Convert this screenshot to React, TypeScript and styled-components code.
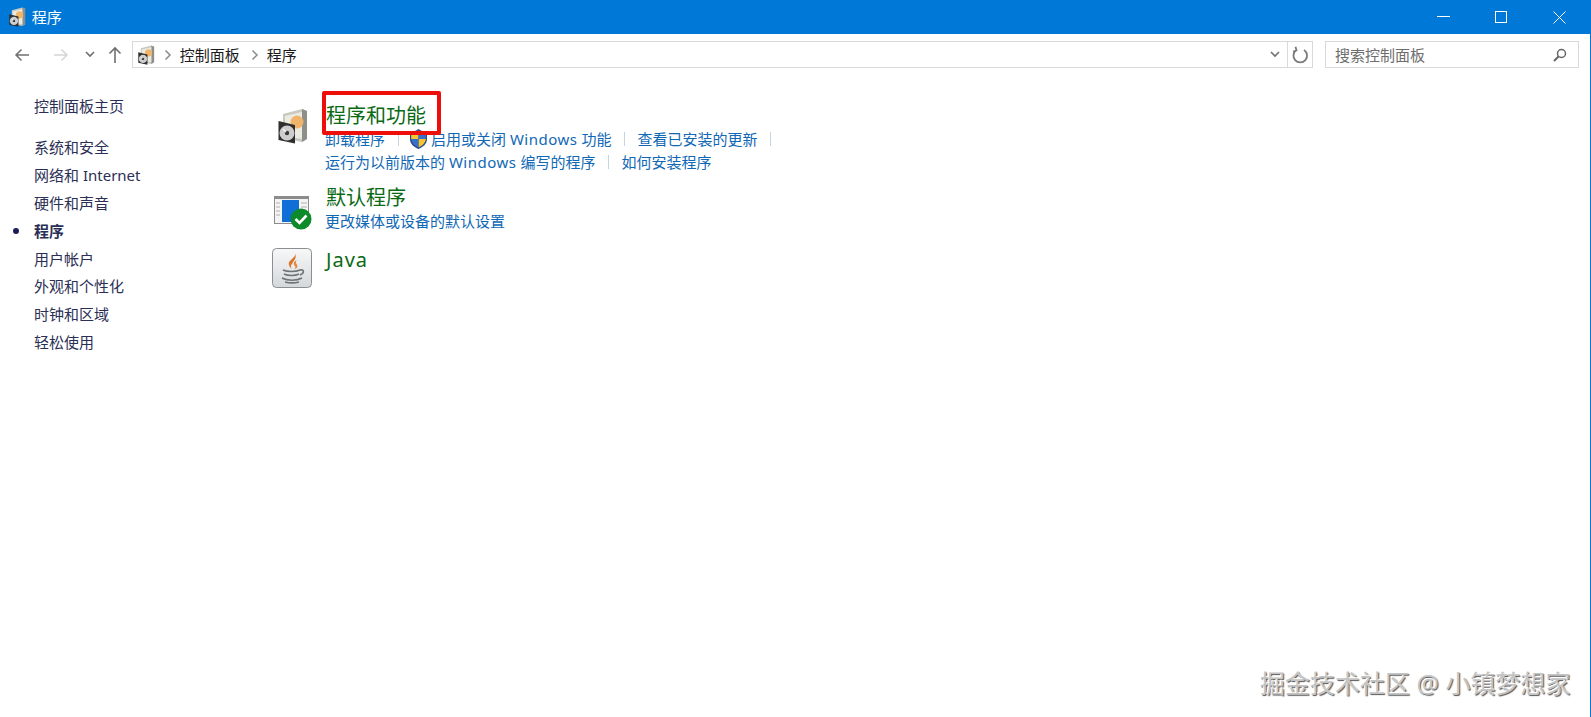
import React from "react";
import styled, { createGlobalStyle } from "styled-components";

const Global = createGlobalStyle`
  html, body { margin: 0; padding: 0; background: #fff; }
  body { font-family: "Noto Sans", "Noto Sans CJK SC", sans-serif; overflow: hidden; }
`;

const Win = styled.div`
  position: relative; width: 1591px; height: 717px; box-sizing: border-box;
  border-right: 1px solid #0078d7; background: #fff; overflow: hidden;
`;
const TitleBar = styled.div`
  height: 34px; background: #0078d7; display: flex; align-items: center; padding-left: 9px; color: #fff;
`;
const TitleText = styled.span`font-size: 15px; margin-left: 6px; line-height: 20px;`;
const WinButtons = styled.div`margin-left: auto; display: flex; align-items: center;`;
const WinBtn = styled.div`
  width: 46px; height: 34px; margin-left: 12px; display: flex; align-items: center; justify-content: center;
  &:last-child { margin-right: 8px; }
`;
const NavBar = styled.div`
  height: 27px; padding: 7px 11px 0 0; display: flex; align-items: stretch;
`;
const NavIcons = styled.div`width: 132px; display: flex; align-items: center; flex: none;`;
const NavIcon = styled.span<{ $left: number }>`
  display: flex; width: 18px; margin-left: ${p => p.$left}px; justify-content: center;
`;
const AddressBox = styled.div`
  flex: 1; border: 1px solid #d9d9d9; display: flex; align-items: center; box-sizing: border-box; padding-left: 5px;
  font-size: 15px; color: #1a1a1a;
`;
const Crumb = styled.span<{ $left: number }>`
  display: flex; margin: 0 8px 0 ${p => p.$left}px;
`;
const Spacer = styled.div`flex: 1;`;
const AddrEnd = styled.div`
  width: 24px; align-self: stretch; border-left: 1px solid #d9d9d9; display: flex; align-items: center; justify-content: center;
`;
const DropSlot = styled.div`width: 24px; display: flex; justify-content: center;`;
const SearchBox = styled.div`
  width: 254px; margin-left: 12px; border: 1px solid #d9d9d9; box-sizing: border-box; display: flex; align-items: center;
  padding: 0 11px 0 9px; font-size: 15px; color: #6d6d6d; justify-content: space-between;
`;
const Body = styled.div`display: flex; padding-top: 28px;`;
const Side = styled.nav`width: 272px; flex: none; padding-left: 34px; box-sizing: border-box;`;
const SideItem = styled.div<{ $active?: boolean; $gap?: number }>`
  position: relative; font-size: 15px; line-height: 20px; height: 20px; margin-bottom: 7.9px;
  margin-top: ${p => p.$gap ?? 0}px;
  color: #2b2f55; font-weight: ${p => (p.$active ? 700 : 400)};
  ${p => p.$active ? `&::before { content: ""; position: absolute; left: -21px; top: 7px; width: 6px; height: 6px; border-radius: 50%; background: #1c1c5a; }` : ""}
`;
const Main = styled.main`flex: 1; padding-top: 7px;`;
const Section = styled.section<{ $h: number }>`display: flex; height: ${p => p.$h}px;`;
const IconCell = styled.div<{ $pl: number; $pt: number }>`
  width: 53px; flex: none; box-sizing: border-box; padding: ${p => p.$pt}px 0 0 ${p => p.$pl}px;
`;
const Heading = styled.div`
  position: relative; font-size: 20px; line-height: 25px; color: #0a6a14; margin-left: 1px; width: fit-content;
`;
const Latin = styled.span`letter-spacing: 0.5px;`;
const HeadLatin = styled.span`letter-spacing: 1px;`;
const RedBox = styled.div`
  position: absolute; left: -4px; top: -12px; width: 119px; height: 44px; border: 4px solid #ef0f0a; border-radius: 2px; box-sizing: border-box;
`;
const LinkRow = styled.div`
  display: flex; align-items: center; font-size: 15px; line-height: 22px; height: 22.5px; color: #1168b5; white-space: pre;
`;
const Sep = styled.span`width: 1px; height: 14px; background: #c8d4dc; margin: 0 12px 0 13px;`;
const Shield = styled.span`display: inline-flex; margin: 0 3px 0 -2px;`;
const Watermark = styled.div`
  position: absolute; left: 1260px; top: 668px; font-size: 25px; line-height: 30px; white-space: nowrap;
  color: #c4c4c4; text-shadow: -1px -1px 0 #fff, 1px 1px 1px #555;
`;

const ProgIcon = ({ s = 36 }: { s?: number }) => (
  <svg width={s * 30 / 36} height={s} viewBox="0 0 30 36">
    <path d="M5 6 L24 1 L29 3 L29 31 L24 34 L5 30 Z" fill="#c9c9c2" />
    <path d="M24 1 L29 3 L29 31 L24 34 Z" fill="#8f8f8a" />
    <path d="M7 8 L24 4 L24 31 L7 28 Z" fill="#ecebe2" />
    <circle cx="19" cy="14" r="6.500" fill="#f0b46a" />
    <path d="M0.500 13 L17 17 L17 35.500 L0.500 32 Z" fill="#2f2f2f" />
    <circle cx="9" cy="25" r="7.500" fill="#cdcdcd" />
    <circle cx="9" cy="25" r="2.200" fill="#3a3a3a" />
    <path d="M5 21 L8 24" stroke="#f2f2f2" strokeWidth="1.500" />
  </svg>
);

const LinkShield = () => (
  <svg width="19" height="22" viewBox="0 0 19 22">
    <path d="M9.500 1 C12 3 15 4 18 4 L18 11 C18 16 14 19 9.500 21 C5 19 1 16 1 11 L1 4 C4 4 7 3 9.500 1 Z" fill="#2d4a8a" />
    <path d="M9.500 2.500 L9.500 11 L2.200 11 L2.200 5 C5 5 7.500 4 9.500 2.500 Z" fill="#f7c52c" />
    <path d="M9.500 2.500 C11.500 4 14 5 16.800 5 L16.800 11 L9.500 11 Z" fill="#3a70c8" />
    <path d="M9.500 11 L16.800 11 C16.500 15 13 18 9.500 19.500 Z" fill="#f7c52c" />
    <path d="M2.200 11 L9.500 11 L9.500 19.500 C6 18 2.500 15 2.200 11 Z" fill="#3a70c8" />
  </svg>
);

const DefaultIcon = () => (
  <svg width="38" height="34" viewBox="0 0 38 34">
    <rect x="0" y="0" width="35" height="28" fill="#8c8c8c" />
    <rect x="1" y="3" width="33" height="24" fill="#f4f4f4" />
    <rect x="8" y="4" width="17" height="22" fill="#0f6fd6" />
    <path d="M2 7h4M2 11h4M2 15h4M2 19h4M27 7h6M27 11h6M27 15h6" stroke="#b0b0b0" strokeWidth="1" />
    <circle cx="27" cy="23" r="10.500" fill="#0d8a2a" />
    <path d="M21.500 23 L25.500 27 L32.500 19.500" stroke="#fff" strokeWidth="2.600" fill="none" />
  </svg>
);

const JavaIcon = () => (
  <svg width="40" height="40" viewBox="0 0 40 40">
    <defs>
      <linearGradient id="jb" x1="0" y1="0" x2="0" y2="1">
        <stop offset="0" stopColor="#f8f8f8" />
        <stop offset="1" stopColor="#d4d8da" />
      </linearGradient>
    </defs>
    <rect x="0.500" y="0.500" width="39" height="39" rx="4" fill="url(#jb)" stroke="#8a8f93" />
    <path d="M23 5 C25 10 15 12 17 17 C17.500 19 19 20 20 21 C18 19 19 17 20.500 15 C22.500 12 25 10 23 5 Z" fill="#d9752c" />
    <path d="M25 12 C21 14 21 16 23 18 C24 20 23 21 22 21.500 C26 20 26 18 24.500 16 C23.500 14.500 24 13 25 12 Z" fill="#e58a3c" />
    <path d="M11 22 C15 24 24 24 28 22 M12 26 C16 28 23 28 27 26 M10 30 C15 33 25 33 30 30 M13 34 C17 35 23 35 27 34 M28 22 C32 21 33 25 28 27" stroke="#6d7478" strokeWidth="1.600" fill="none" />
  </svg>
);

const Chevron = () => (
  <svg width="8" height="12" viewBox="0 0 8 12"><path d="M1.500 1.500 L6 6 L1.500 10.500" stroke="#8a8a8a" strokeWidth="1.500" fill="none" /></svg>
);
const Down = () => (
  <svg width="10" height="7" viewBox="0 0 10 7"><path d="M1 1 L5 5 L9 1" stroke="#6f6f6f" strokeWidth="1.600" fill="none" /></svg>
);

const sideItems = ["系统和安全", "网络和 Internet", "硬件和声音", "程序", "用户帐户", "外观和个性化", "时钟和区域", "轻松使用"];

export default function App() {
  return (
    <Win>
      <Global />
      <TitleBar>
        <ProgIcon s={20} />
        <TitleText>程序</TitleText>
        <WinButtons>
          <WinBtn><svg width="13" height="2" viewBox="0 0 13 2"><rect width="13" height="1" fill="#fff" /></svg></WinBtn>
          <WinBtn><svg width="12" height="12" viewBox="0 0 12 12"><rect x="0.500" y="0.500" width="11" height="11" fill="none" stroke="#fff" /></svg></WinBtn>
          <WinBtn><svg width="13" height="13" viewBox="0 0 13 13"><path d="M0.500 0.500 L12.500 12.500 M12.500 0.500 L0.500 12.500" stroke="#fff" /></svg></WinBtn>
        </WinButtons>
      </TitleBar>
      <NavBar>
        <NavIcons>
          <NavIcon $left={13}><svg width="16" height="14" viewBox="0 0 16 14"><path d="M15 7 H2 M7.500 1.500 L2 7 L7.500 12.500" stroke="#6f6f6f" strokeWidth="1.500" fill="none" /></svg></NavIcon>
          <NavIcon $left={21}><svg width="16" height="14" viewBox="0 0 16 14"><path d="M1 7 H14 M8.500 1.500 L14 7 L8.500 12.500" stroke="#d6d6d6" strokeWidth="1.500" fill="none" /></svg></NavIcon>
          <NavIcon $left={11}><Down /></NavIcon>
          <NavIcon $left={7}><svg width="14" height="17" viewBox="0 0 14 17"><path d="M7 17 V2 M1.500 7.500 L7 2 L12.500 7.500" stroke="#6f6f6f" strokeWidth="1.600" fill="none" /></svg></NavIcon>
        </NavIcons>
        <AddressBox>
          <ProgIcon s={20} />
          <Crumb $left={9}><Chevron /></Crumb>
          <span>控制面板</span>
          <Crumb $left={11}><Chevron /></Crumb>
          <span>程序</span>
          <Spacer />
          <DropSlot><Down /></DropSlot>
          <AddrEnd>
            <svg width="17" height="18" viewBox="0 0 17 18"><path d="M4.500 4 A6.800 6.800 0 1 0 12 4 M3.500 0.800 L4.500 4.500 L1 5.500" stroke="#7a7a7a" strokeWidth="1.800" fill="none" /></svg>
          </AddrEnd>
        </AddressBox>
        <SearchBox>
          <span>搜索控制面板</span>
          <svg width="14" height="14" viewBox="0 0 14 14"><circle cx="8.500" cy="5.500" r="4" fill="none" stroke="#666" strokeWidth="1.500" /><path d="M5.500 8.500 L1 13" stroke="#666" strokeWidth="2" /></svg>
        </SearchBox>
      </NavBar>
      <Body>
        <Side>
          <SideItem>控制面板主页</SideItem>
          {sideItems.map((t, i) => (
            <SideItem key={t} $gap={i === 0 ? 21 : 0} $active={t === "程序"}>{t}</SideItem>
          ))}
        </Side>
        <Main>
          <Section $h={82}>
            <IconCell $pl={6} $pt={5}><ProgIcon /></IconCell>
            <div>
              <Heading>程序和功能<RedBox /></Heading>
              <LinkRow>
                卸载程序<Sep /><Shield><LinkShield /></Shield>启用或关闭 <Latin>Windows</Latin> 功能<Sep />查看已安装的更新<Sep />
              </LinkRow>
              <LinkRow>
                运行为以前版本的 <Latin>Windows</Latin> 编写的程序<Sep />如何安装程序
              </LinkRow>
            </div>
          </Section>
          <Section $h={62}>
            <IconCell $pl={2} $pt={11}><DefaultIcon /></IconCell>
            <div>
              <Heading>默认程序</Heading>
              <LinkRow>更改媒体或设备的默认设置</LinkRow>
            </div>
          </Section>
          <Section $h={50}>
            <IconCell $pl={0} $pt={1}><JavaIcon /></IconCell>
            <div>
              <Heading><HeadLatin>Java</HeadLatin></Heading>
            </div>
          </Section>
        </Main>
      </Body>
      <Watermark>掘金技术社区 @ 小镇梦想家</Watermark>
    </Win>
  );
}
